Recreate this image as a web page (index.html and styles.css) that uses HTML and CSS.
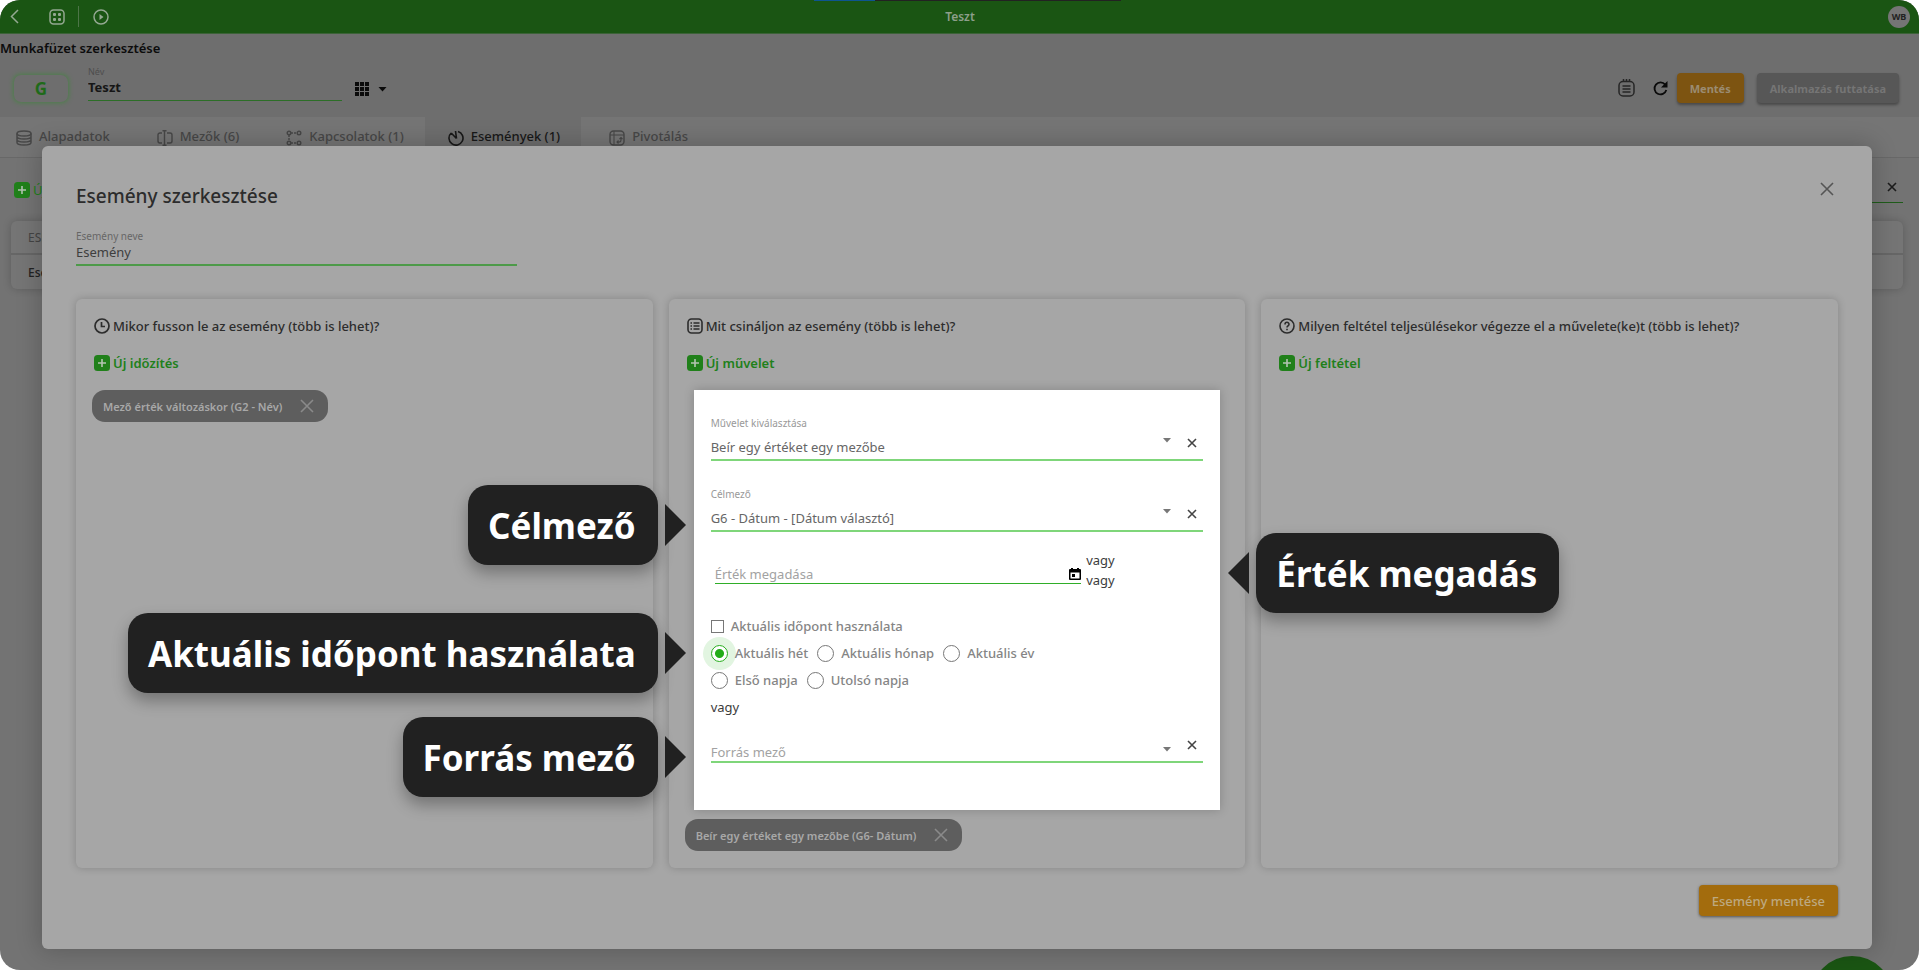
FILE: index.html
```html
<!DOCTYPE html>
<html lang="hu">
<head>
<meta charset="utf-8">
<title>Esemény szerkesztése</title>
<link rel="stylesheet" href="styles.css">
</head>
<body>
<svg class="defs" aria-hidden="true">
  <symbol id="x" viewBox="0 0 14 14"><path d="M1 1l12 12M13 1L1 13" fill="none" stroke="currentColor" stroke-width="1.6"/></symbol>
  <symbol id="xb" viewBox="0 0 10 10"><path d="M1 1l8 8M9 1L1 9" fill="none" stroke="currentColor" stroke-width="1.6"/></symbol>
  <symbol id="caret" viewBox="0 0 8 5"><path d="M0 0h8L4 4.5z" fill="currentColor"/></symbol>
  <symbol id="plus" viewBox="0 0 16 16"><rect width="16" height="16" rx="3.5" fill="currentColor"/><path d="M8 4v8M4 8h8" stroke="#b4c4b2" stroke-width="1.6" fill="none"/></symbol>
</svg>
<div class="app">
  <header class="topbar">
    <div class="topbar-left">
      <button class="icon-btn back" aria-label="Vissza"><svg width="9" height="15" viewBox="0 0 9 15"><path d="M8 1L1.500 7.500 8 14" fill="none" stroke="currentColor" stroke-width="1.5"/></svg></button>
      <button class="icon-btn" aria-label="Alkalmazások"><svg width="16" height="16" viewBox="0 0 16 16" fill="none" stroke="currentColor"><rect x="1" y="1" width="14" height="14" rx="3.500" stroke-width="1.5"/><g fill="currentColor" stroke="none"><rect x="4" y="4" width="3" height="3" rx="1"/><rect x="9" y="4" width="3" height="3" rx="1"/><rect x="4" y="9" width="3" height="3" rx="1"/><rect x="9" y="9" width="3" height="3" rx="1"/></g></svg></button>
      <span class="divider"></span>
      <button class="icon-btn" aria-label="Indítás"><svg width="16" height="16" viewBox="0 0 16 16"><circle cx="8" cy="8" r="7" fill="none" stroke="currentColor" stroke-width="1.500"/><path d="M6.500 5l4 3-4 3z" fill="currentColor"/></svg></button>
    </div>
    <span class="topbar-title">Teszt</span>
    <div class="topbar-right"><span class="avatar">WB</span></div>
    <span class="progress"></span>
  </header>

  <section class="workbook">
    <h1 class="page-title">Munkafüzet szerkesztése</h1>
    <div class="toolbar">
      <span class="badge">G</span>
      <div class="name-field">
        <label for="wb-name">Név</label>
        <input id="wb-name" type="text" value="Teszt">
      </div>
      <button class="icon-btn grid-btn" aria-label="Nézet">
        <svg width="14" height="14" viewBox="0 0 14 14" fill="currentColor"><path d="M0 0h4v4H0zM5 0h4v4H5zM10 0h4v4h-4zM0 5h4v4H0zM5 5h4v4H5zM10 5h4v4h-4zM0 10h4v4H0zM5 10h4v4H5zM10 10h4v4h-4z"/></svg>
        <svg width="9" height="5"><use href="#caret"/></svg>
      </button>
      <div class="actions">
        <button class="icon-btn" aria-label="Napló"><svg width="17" height="18" viewBox="0 0 17 18" fill="none" stroke="currentColor" stroke-width="1.500"><rect x="1" y="2.500" width="15" height="14.500" rx="4"/><path d="M5.500 0v3M8.500 0v3M11.500 0v3M4.500 7h8M4.500 10h8M4.500 13h8"/></svg></button>
        <button class="icon-btn dark" aria-label="Frissítés"><svg width="15" height="15" viewBox="0 0 15 15"><path d="M12.200 3.600A6 6 0 1 0 13.300 9" fill="none" stroke="currentColor" stroke-width="1.800"/><path d="M14.500 0v6.500H8z" fill="currentColor"/></svg></button>
        <button class="btn amber">Mentés</button>
        <button class="btn grey">Alkalmazás futtatása</button>
      </div>
    </div>
  </section>

  <nav class="tabs">
    <a href="#" class="tab"><svg width="16" height="16" viewBox="0 0 16 16" fill="none" stroke="currentColor" stroke-width="1.500"><ellipse cx="8" cy="3.500" rx="7" ry="2.500"/><path d="M1 3.500v9c0 1.400 3 2.500 7 2.500s7-1.100 7-2.500v-9M1 6.500C1 8 4 9 8 9s7-1 7-2.500M1 9.500C1 11 4 12 8 12s7-1 7-2.500"/></svg>Alapadatok</a>
    <a href="#" class="tab"><svg width="16" height="16" viewBox="0 0 16 16" fill="none" stroke="currentColor" stroke-width="1.400"><path d="M5 3H3a2 2 0 0 0-2 2v6a2 2 0 0 0 2 2h2M10 3h3a2 2 0 0 1 2 2v6a2 2 0 0 1-2 2h-3M7.500 1v14M5.500.7h4M5.500 15.300h4"/></svg>Mezők (6)</a>
    <a href="#" class="tab"><svg width="16" height="16" viewBox="0 0 16 16" fill="none" stroke="currentColor" stroke-width="1.400"><circle cx="3" cy="3" r="1.800"/><circle cx="13" cy="3" r="1.800"/><circle cx="3" cy="13" r="1.800"/><circle cx="13" cy="13" r="1.800"/><path d="M5 3h6M3 5v6M5 13h6" stroke-dasharray="2 1"/></svg>Kapcsolatok (1)</a>
    <a href="#" class="tab active"><svg width="16" height="16" viewBox="0 0 16 16" fill="none" stroke="currentColor" stroke-width="1.600"><path d="M10 1.400A7 7 0 1 1 3.200 3M8.500 8.500L7.500 1M8.500 8.500L3.200 3"/></svg>Események (1)</a>
    <a href="#" class="tab"><svg width="16" height="16" viewBox="0 0 16 16" fill="none" stroke="currentColor" stroke-width="1.400"><rect x="1" y="1" width="14" height="14" rx="3.500"/><path d="M1 5h14M5 1v14M8 12h2a2 2 0 0 0 2-2V8M9.500 10.500L8 12l1.500 1.500M10.500 9L12 7.500 13.500 9" stroke-width="1.100"/></svg>Pivotálás</a>
  </nav>

  <main class="content">
    <div class="content-bar">
      <button class="add"><svg width="16" height="16"><use href="#plus"/></svg>Új</button>
      <div class="search"><button class="icon-btn" aria-label="Keresés törlése"><svg width="10" height="10"><use href="#xb"/></svg></button></div>
    </div>
    <table class="events">
      <thead><tr><th>ESEMÉNY</th></tr></thead>
      <tbody><tr><td>Esemény</td></tr></tbody>
    </table>
  </main>
  <button class="fab" aria-label="Segítség"></button>

  <div class="modal" role="dialog" aria-labelledby="modal-title">
    <div class="modal-head">
      <h2 id="modal-title">Esemény szerkesztése</h2>
      <button class="icon-btn close" aria-label="Bezárás"><svg width="14" height="14"><use href="#x"/></svg></button>
    </div>
    <div class="event-name">
      <label for="ev-name">Esemény neve</label>
      <input id="ev-name" type="text" value="Esemény">
    </div>

    <div class="cards">
      <section class="card">
        <h3><svg width="16" height="16" viewBox="0 0 16 16" fill="none" stroke="currentColor" stroke-width="1.700"><circle cx="8" cy="8" r="7"/><path d="M7.500 4v4.500H11"/></svg>Mikor fusson le az esemény (több is lehet)?</h3>
        <button class="add"><svg width="16" height="16"><use href="#plus"/></svg>Új időzítés</button>
        <div class="stack">
          <span class="chip">Mező érték változáskor (G2 - Név)<button class="icon-btn" aria-label="Törlés"><svg width="14" height="14"><use href="#x"/></svg></button></span>
        </div>
      </section>

      <section class="card">
        <h3><svg width="16" height="16" viewBox="0 0 16 16" fill="none" stroke="currentColor" stroke-width="1.600"><rect x="1" y="1" width="14" height="14" rx="3.500"/><path d="M6.500 5h6M6.500 8h6M6.500 11h6M3.500 5H5M3.500 8H5M3.500 11H5"/></svg>Mit csináljon az esemény (több is lehet)?</h3>
        <button class="add"><svg width="16" height="16"><use href="#plus"/></svg>Új művelet</button>
        <div class="stack">
          <div class="popup">
            <div class="field">
              <label for="op">Művelet kiválasztása</label>
              <div class="select-row">
                <select id="op"><option>Beír egy értéket egy mezőbe</option></select>
                <svg class="caret" width="8" height="5"><use href="#caret"/></svg>
                <button class="icon-btn" aria-label="Törlés"><svg width="10" height="10"><use href="#xb"/></svg></button>
              </div>
            </div>
            <div class="field">
              <label for="target">Célmező</label>
              <div class="select-row">
                <select id="target"><option>G6 - Dátum - [Dátum választó]</option></select>
                <svg class="caret" width="8" height="5"><use href="#caret"/></svg>
                <button class="icon-btn" aria-label="Törlés"><svg width="10" height="10"><use href="#xb"/></svg></button>
              </div>
            </div>
            <div class="date-row">
              <div class="date">
                <input type="text" aria-label="Érték megadása" placeholder="Érték megadása">
                <button class="icon-btn" aria-label="Naptár"><svg width="12" height="12" viewBox="0 0 12 12"><path d="M2 0h2v1h4V0h2v1h1a1 1 0 0 1 1 1v9a1 1 0 0 1-1 1H1a1 1 0 0 1-1-1V2a1 1 0 0 1 1-1h1zM1.500 4.500v6h9v-6zM3 6h3v3H3z" fill="#000" fill-rule="evenodd"/></svg></button>
              </div>
              <div class="or"><span>vagy</span><span>vagy</span></div>
            </div>
            <div class="options">
              <label class="opt"><input type="checkbox">Aktuális időpont használata</label>
              <div class="opt-row">
                <label class="opt"><input type="radio" name="period" checked>Aktuális hét</label>
                <label class="opt"><input type="radio" name="period">Aktuális hónap</label>
                <label class="opt"><input type="radio" name="period">Aktuális év</label>
              </div>
              <div class="opt-row">
                <label class="opt"><input type="radio" name="day">Első napja</label>
                <label class="opt"><input type="radio" name="day">Utolsó napja</label>
              </div>
              <span class="or-text">vagy</span>
            </div>
            <div class="select-row compact">
              <select aria-label="Forrás mező"><option>Forrás mező</option></select>
              <svg class="caret" width="8" height="5"><use href="#caret"/></svg>
              <button class="icon-btn" aria-label="Törlés"><svg width="10" height="10"><use href="#xb"/></svg></button>
            </div>
            <div class="callout left c-target">Célmező</div>
            <div class="callout left c-time">Aktuális időpont használata</div>
            <div class="callout left c-source">Forrás mező</div>
            <div class="callout right c-value">Érték megadás</div>
          </div>
          <span class="chip">Beír egy értéket egy mezőbe (G6- Dátum)<button class="icon-btn" aria-label="Törlés"><svg width="14" height="14"><use href="#x"/></svg></button></span>
        </div>
      </section>

      <section class="card">
        <h3><svg width="16" height="16" viewBox="0 0 16 16" fill="none" stroke="currentColor" stroke-width="1.600"><circle cx="8" cy="8" r="7"/><path d="M6 6.500C6 3.500 10 3.700 10 6.200 10 7.800 8 7.800 8 9.500M8 10.800v1.500"/></svg>Milyen feltétel teljesülésekor végezze el a művelete(ke)t (több is lehet)?</h3>
        <button class="add"><svg width="16" height="16"><use href="#plus"/></svg>Új feltétel</button>
      </section>
    </div>

    <button class="save">Esemény mentése</button>
  </div>
</div>
</body>
</html>
```

FILE: styles.css
```css
* { box-sizing: border-box; }
body { margin: 0; background: #fff; font-family: "Noto Sans", "Open Sans", sans-serif; font-size: 13px; color: #2f2f2f; }
button, input, select { font: inherit; color: inherit; margin: 0; padding: 0; border: 0; background: none; border-radius: 0; }
input, select { min-width: 0; outline: 0; }
svg { display: block; flex: none; }
h1, h2, h3 { margin: 0; font-weight: 600; }
a { color: inherit; text-decoration: none; }
.defs { position: absolute; width: 0; height: 0; }
.icon-btn { display: flex; align-items: center; flex: none; }

.app { position: relative; min-height: 100vh; border-radius: 20px; overflow: hidden; background: #737373; }

/* top bar */
.topbar { position: relative; display: grid; grid-template-columns: 1fr auto 1fr; align-items: center; height: 34px; padding: 0 9px 0 10px; background: #1a5513; border-bottom: 1px solid #3c6338; color: #94a892; }
.topbar-left { display: flex; align-items: center; }
.back { margin-right: 30px; }
.divider { width: 1px; height: 21px; margin: 0 14px 0 13px; background: #4d7548; }
.topbar-title { font-size: 12px; font-weight: 600; color: #8d9f8b; }
.topbar-right { display: flex; justify-content: flex-end; }
.avatar { width: 22px; height: 22px; border-radius: 50%; background: #757575; color: #222; font-size: 9px; font-weight: 700; line-height: 22px; text-align: center; }
.progress { position: absolute; top: 0; left: 42.4%; width: 16%; height: 1px; background: linear-gradient(90deg, #0e5590 20%, #222 20%); }

/* workbook header */
.workbook { height: 83px; background: #6e6e6e; padding-top: 5px; }
.page-title { font-size: 13px; line-height: 18px; font-weight: 600; color: #0c0c0c; }
.toolbar { display: flex; align-items: flex-end; height: 44px; padding: 0 20px 0 14px; }
.badge { width: 54px; height: 27px; margin: 0 20px -1px 0; border-radius: 7px; box-shadow: 0 0 4px 1px #4c8049; background: #6e6e6e; color: #1f6a19; font-size: 17px; font-weight: 700; line-height: 28px; text-align: center; }
.name-field { display: flex; flex-direction: column; width: 254px; margin-right: 13px; }
.name-field label { font-size: 9px; line-height: 10px; color: #4d4d4d; }
.name-field input { height: 24px; padding-bottom: 4px; border-bottom: 1px solid #2c6e27; font-size: 13px; font-weight: 700; color: #161616; }
.grid-btn { gap: 9px; height: 24px; color: #0b0b0b; }
.actions { display: flex; align-items: center; height: 30px; margin: 0 0 -2px auto; }
.actions .icon-btn { margin-right: 18px; color: #262626; }
.actions .dark { margin-right: 9px; color: #0a0a0a; }
.btn { height: 30px; padding: 0 13px; border-radius: 4px; box-shadow: 0 2px 3px rgba(0,0,0,.35); font-size: 11px; font-weight: 700; white-space: nowrap; }
.amber { margin-right: 13px; background: #7d5411; color: #9b8c72; }
.grey { background: #575757; color: #757575; }

/* tabs */
.tabs { display: flex; height: 41px; background: #757575; border-bottom: 1px solid #686868; }
.tab { display: flex; align-items: flex-start; gap: 7px; padding: 11px 21px 0 26px; color: #474747; font-size: 13px; font-weight: 500; line-height: 16px; white-space: nowrap; }
.tab:first-child { padding-left: 16px; }
.tab svg { margin-top: 2px; }
.tab.active { padding-left: 23px; background: #6e6e6e; color: #181818; }
.tab:last-child { padding-left: 28px; }

/* background list */
.content { padding: 22px 16px 0 11px; }
.content-bar { display: flex; justify-content: space-between; align-items: flex-start; height: 41px; }
.content-bar .add { padding-left: 3px; font-weight: 400; }
.search { display: flex; justify-content: flex-end; align-items: center; width: 200px; height: 23px; padding: 0 6px 8px 0; border-bottom: 1px solid #1f5c1a; color: #1c1c1c; }
.events { width: 100%; border-spacing: 0; border-radius: 6px; background: #757575; box-shadow: 0 0 8px rgba(0,0,0,.2); }
.events th, .events td { height: 34px; padding: 0 17px; text-align: left; font-size: 12px; }
.events th { border-bottom: 2px solid #666; font-weight: 400; color: #444; }
.events td { font-weight: 500; color: #222; }
.fab { position: absolute; right: 26px; bottom: -68px; width: 82px; height: 82px; border-radius: 50%; background: #1a5513; }

/* modal */
.modal { position: absolute; inset: 146px 47px 21px 42px; display: flex; flex-direction: column; padding: 36px 34px 33px; border-radius: 6px; background: #a6a6a6; box-shadow: 0 0 24px 2px rgba(0,0,0,.2); }
.modal-head { display: flex; justify-content: space-between; align-items: flex-start; padding-right: 4px; }
.modal-head h2 { font-size: 19px; line-height: 28px; font-weight: 500; color: #2c2c2c; }
.close { color: #555; }
.event-name { display: flex; flex-direction: column; width: 25%; margin: 20px 0 33px; }
.event-name label { font-size: 10px; line-height: 12px; color: #666; }
.event-name input { height: 24px; padding-bottom: 2px; border-bottom: 2px solid #4d9a49; font-size: 13px; color: #3e3e3e; }

.add { display: flex; align-items: center; gap: 3px; height: 20px; color: #20801a; font-size: 13px; font-weight: 600; white-space: nowrap; }
.cards { flex: 1; display: grid; grid-template-columns: repeat(3, 1fr); gap: 16px; }
.card { display: flex; flex-direction: column; align-items: stretch; gap: 17px; padding: 17px 16px; border-radius: 6px; background: #a6a6a6; box-shadow: 0 0 8px rgba(0,0,0,.2); }
.card h3 { display: flex; align-items: center; gap: 3px; padding-left: 2px; font-size: 13px; line-height: 20px; font-weight: 500; color: #2c2c2c; white-space: nowrap; }
.card .add { align-self: flex-start; padding-left: 2px; }
.stack { display: flex; flex-direction: column; align-items: flex-start; gap: 9px; }
.chip { display: flex; align-items: center; gap: 18px; height: 32px; padding: 0 14px 0 11px; border-radius: 13px; background: #5e5e5e; color: #a8a8a8; font-size: 11px; font-weight: 600; white-space: nowrap; }
.chip .icon-btn { color: #8a8a8a; }

/* operation editor */
.popup { position: relative; align-self: stretch; margin: 0 9px; padding: 27px 17px 47px; background: #fff; box-shadow: 0 0 10px rgba(0,0,0,.2); color: #3c3c3c; }
.field { display: flex; flex-direction: column; margin-bottom: 27px; }
.field label { font-size: 10px; line-height: 12px; color: #999; }
.select-row { display: flex; align-items: flex-start; height: 32px; padding-right: 6px; border-bottom: 2px solid #7fd67a; }
.select-row select { flex: 1; height: 30px; padding-top: 6px; appearance: none; font-size: 13px; color: #666; }
.select-row .caret { margin: 9px 16px 0 0; color: #777; }
.select-row .icon-btn { margin-top: 9px; color: #444; }
.compact { height: 25px; margin-top: 21px; }
.compact select { height: 23px; padding-top: 4px; color: #a2a2a2; }
.compact .icon-btn { margin-top: 2px; }
.date-row { display: flex; align-items: flex-end; gap: 5px; margin: -9px 0 26px; padding-left: 4px; }
.date { flex: 0 1 75%; display: flex; align-items: center; height: 20px; margin-bottom: 6px; border-bottom: 1px solid #2fae28; }
.date input { flex: 1; font-size: 13px; }
.date input::placeholder { color: #a2a2a2; opacity: 1; }
.or { display: flex; flex-direction: column; line-height: 20px; }
.options { display: flex; flex-direction: column; align-items: flex-start; gap: 7px; line-height: 20px; }
.opt-row { display: flex; gap: 9px; }
.opt { display: flex; align-items: center; gap: 7px; color: #858585; font-size: 13px; font-weight: 500; white-space: nowrap; }
.opt input { appearance: none; width: 13px; height: 13px; border: 1px solid #777; background: #fff; }
.opt input[type=radio] { width: 17px; height: 17px; border-radius: 50%; }
.opt input[type=radio]:checked { border-color: #22ac18; background: radial-gradient(circle, #22ac18 4px, #fff 5px); box-shadow: 0 0 0 8px #e2f5e1; }

.callout { position: absolute; height: 80px; padding: 0 22px 0 20px; border-radius: 20px; background: #212121; box-shadow: 0 8px 16px rgba(0,0,0,.3); color: #fff; font-size: 35px; font-weight: 700; line-height: 82px; white-space: nowrap; }
.callout::after { content: ""; position: absolute; top: 19px; border: 21px solid transparent; }
.left { right: calc(100% + 36px); }
.left::after { left: calc(100% + 7px); border-left-color: #212121; border-right-width: 0; }
.right { left: calc(100% + 36px); }
.right::after { right: calc(100% + 7px); border-right-color: #212121; border-left-width: 0; }
.c-target { top: 95px; }
.c-time { top: 223px; }
.c-source { top: 327px; }
.c-value { top: 143px; }

.save { align-self: flex-end; height: 31px; margin-top: 17px; padding: 0 13px; border-radius: 4px; background: #a36c0d; box-shadow: 0 1px 3px rgba(0,0,0,.5); color: #bda980; font-size: 13px; font-weight: 500; }
```
